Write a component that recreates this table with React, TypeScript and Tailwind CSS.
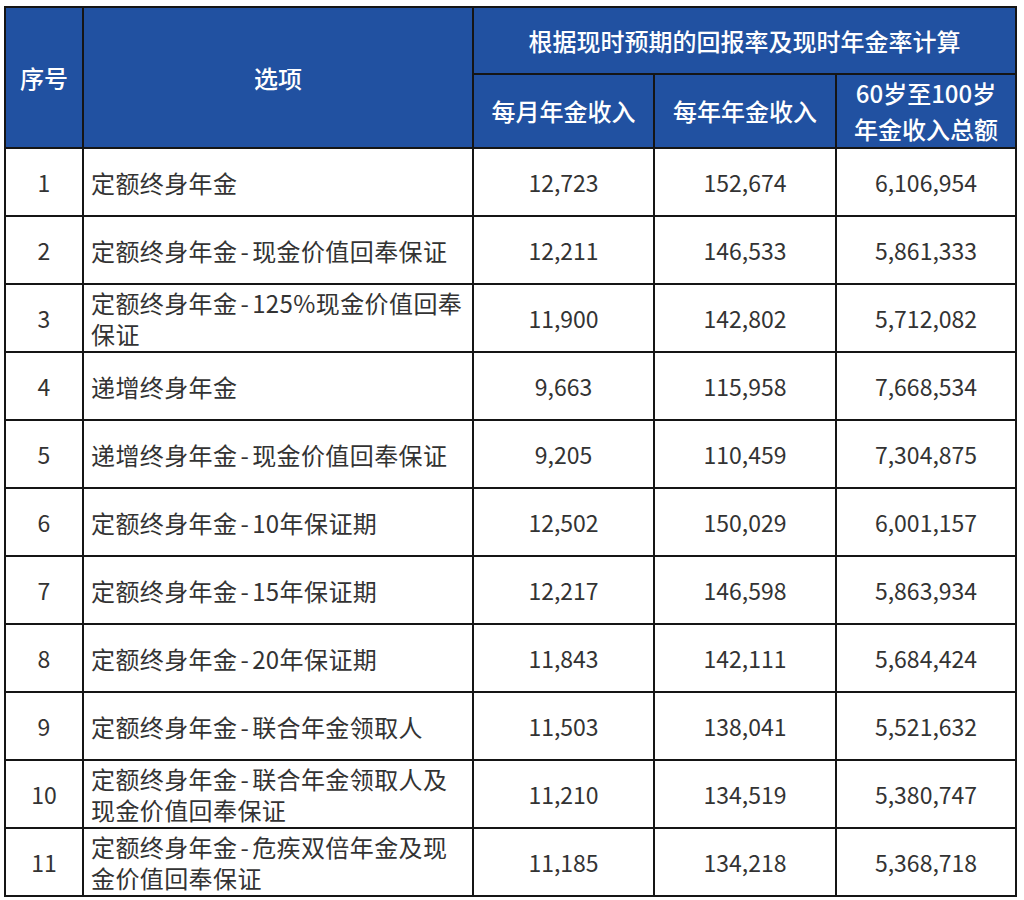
import React from "react";

const rows: [string, string, string, string, string, string][] = [
  ["1", "定额终身年金", "", "12,723", "152,674", "6,106,954"],
  ["2", "定额终身年金", "现金价值回奉保证", "12,211", "146,533", "5,861,333"],
  ["3", "定额终身年金", "125%现金价值回奉保证", "11,900", "142,802", "5,712,082"],
  ["4", "递增终身年金", "", "9,663", "115,958", "7,668,534"],
  ["5", "递增终身年金", "现金价值回奉保证", "9,205", "110,459", "7,304,875"],
  ["6", "定额终身年金", "10年保证期", "12,502", "150,029", "6,001,157"],
  ["7", "定额终身年金", "15年保证期", "12,217", "146,598", "5,863,934"],
  ["8", "定额终身年金", "20年保证期", "11,843", "142,111", "5,684,424"],
  ["9", "定额终身年金", "联合年金领取人", "11,503", "138,041", "5,521,632"],
  ["10", "定额终身年金", "联合年金领取人及现金价值回奉保证", "11,210", "134,519", "5,380,747"],
  ["11", "定额终身年金", "危疾双倍年金及现金价值回奉保证", "11,185", "134,218", "5,368,718"],
];

export default function App() {
  return (
    <div
      className="w-[1024px] h-[900px] bg-white pt-[6px] pl-[4px]"
      style={{ fontFamily: '"Noto Sans CJK SC", "Noto Sans", sans-serif' }}
    >
      <table className="table-fixed border-collapse w-[1011px] border-2 border-[#151515]">
        <colgroup>
          <col className="w-[78px]" />
          <col className="w-[390px]" />
          <col className="w-[181px]" />
          <col className="w-[182px]" />
          <col className="w-[180px]" />
        </colgroup>
        <thead>
          <tr className="h-[67px] bg-[#2151a1] text-white text-[24px]">
            <th rowSpan={2} className="border-2 border-[#151515] font-medium text-center">序号</th>
            <th rowSpan={2} className="border-2 border-[#151515] font-medium text-center">选项</th>
            <th colSpan={3} className="border-2 border-[#151515] font-medium text-center">
              根据现时预期的回报率及现时年金率计算
            </th>
          </tr>
          <tr className="h-[69px] bg-[#2151a1] text-white text-[24px]">
            <th className="border-2 border-[#151515] font-medium text-center">每月年金收入</th>
            <th className="border-2 border-[#151515] font-medium text-center">每年年金收入</th>
            <th className="border-2 border-[#151515] font-medium text-center leading-[36px]">
              60岁至100岁
              <br />
              年金收入总额
            </th>
          </tr>
        </thead>
        <tbody className="text-[#333333] text-[23px]">
          {rows.map((r) => (
            <tr key={r[0]} className="h-[68px]">
              <td className="border-2 border-[#151515] text-center">{r[0]}</td>
              <td className="border-2 border-[#151515] pl-[7px] pr-[6px] text-[24px] leading-[31px] tracking-[0.4px]">
                {r[1]}
                {r[2] && (
                  <>
                    <span className="mx-[3px]">-</span>
                    {r[2]}
                  </>
                )}
              </td>
              <td className="border-2 border-[#151515] text-center">{r[3]}</td>
              <td className="border-2 border-[#151515] text-center">{r[4]}</td>
              <td className="border-2 border-[#151515] text-center">{r[5]}</td>
            </tr>
          ))}
        </tbody>
      </table>
    </div>
  );
}
